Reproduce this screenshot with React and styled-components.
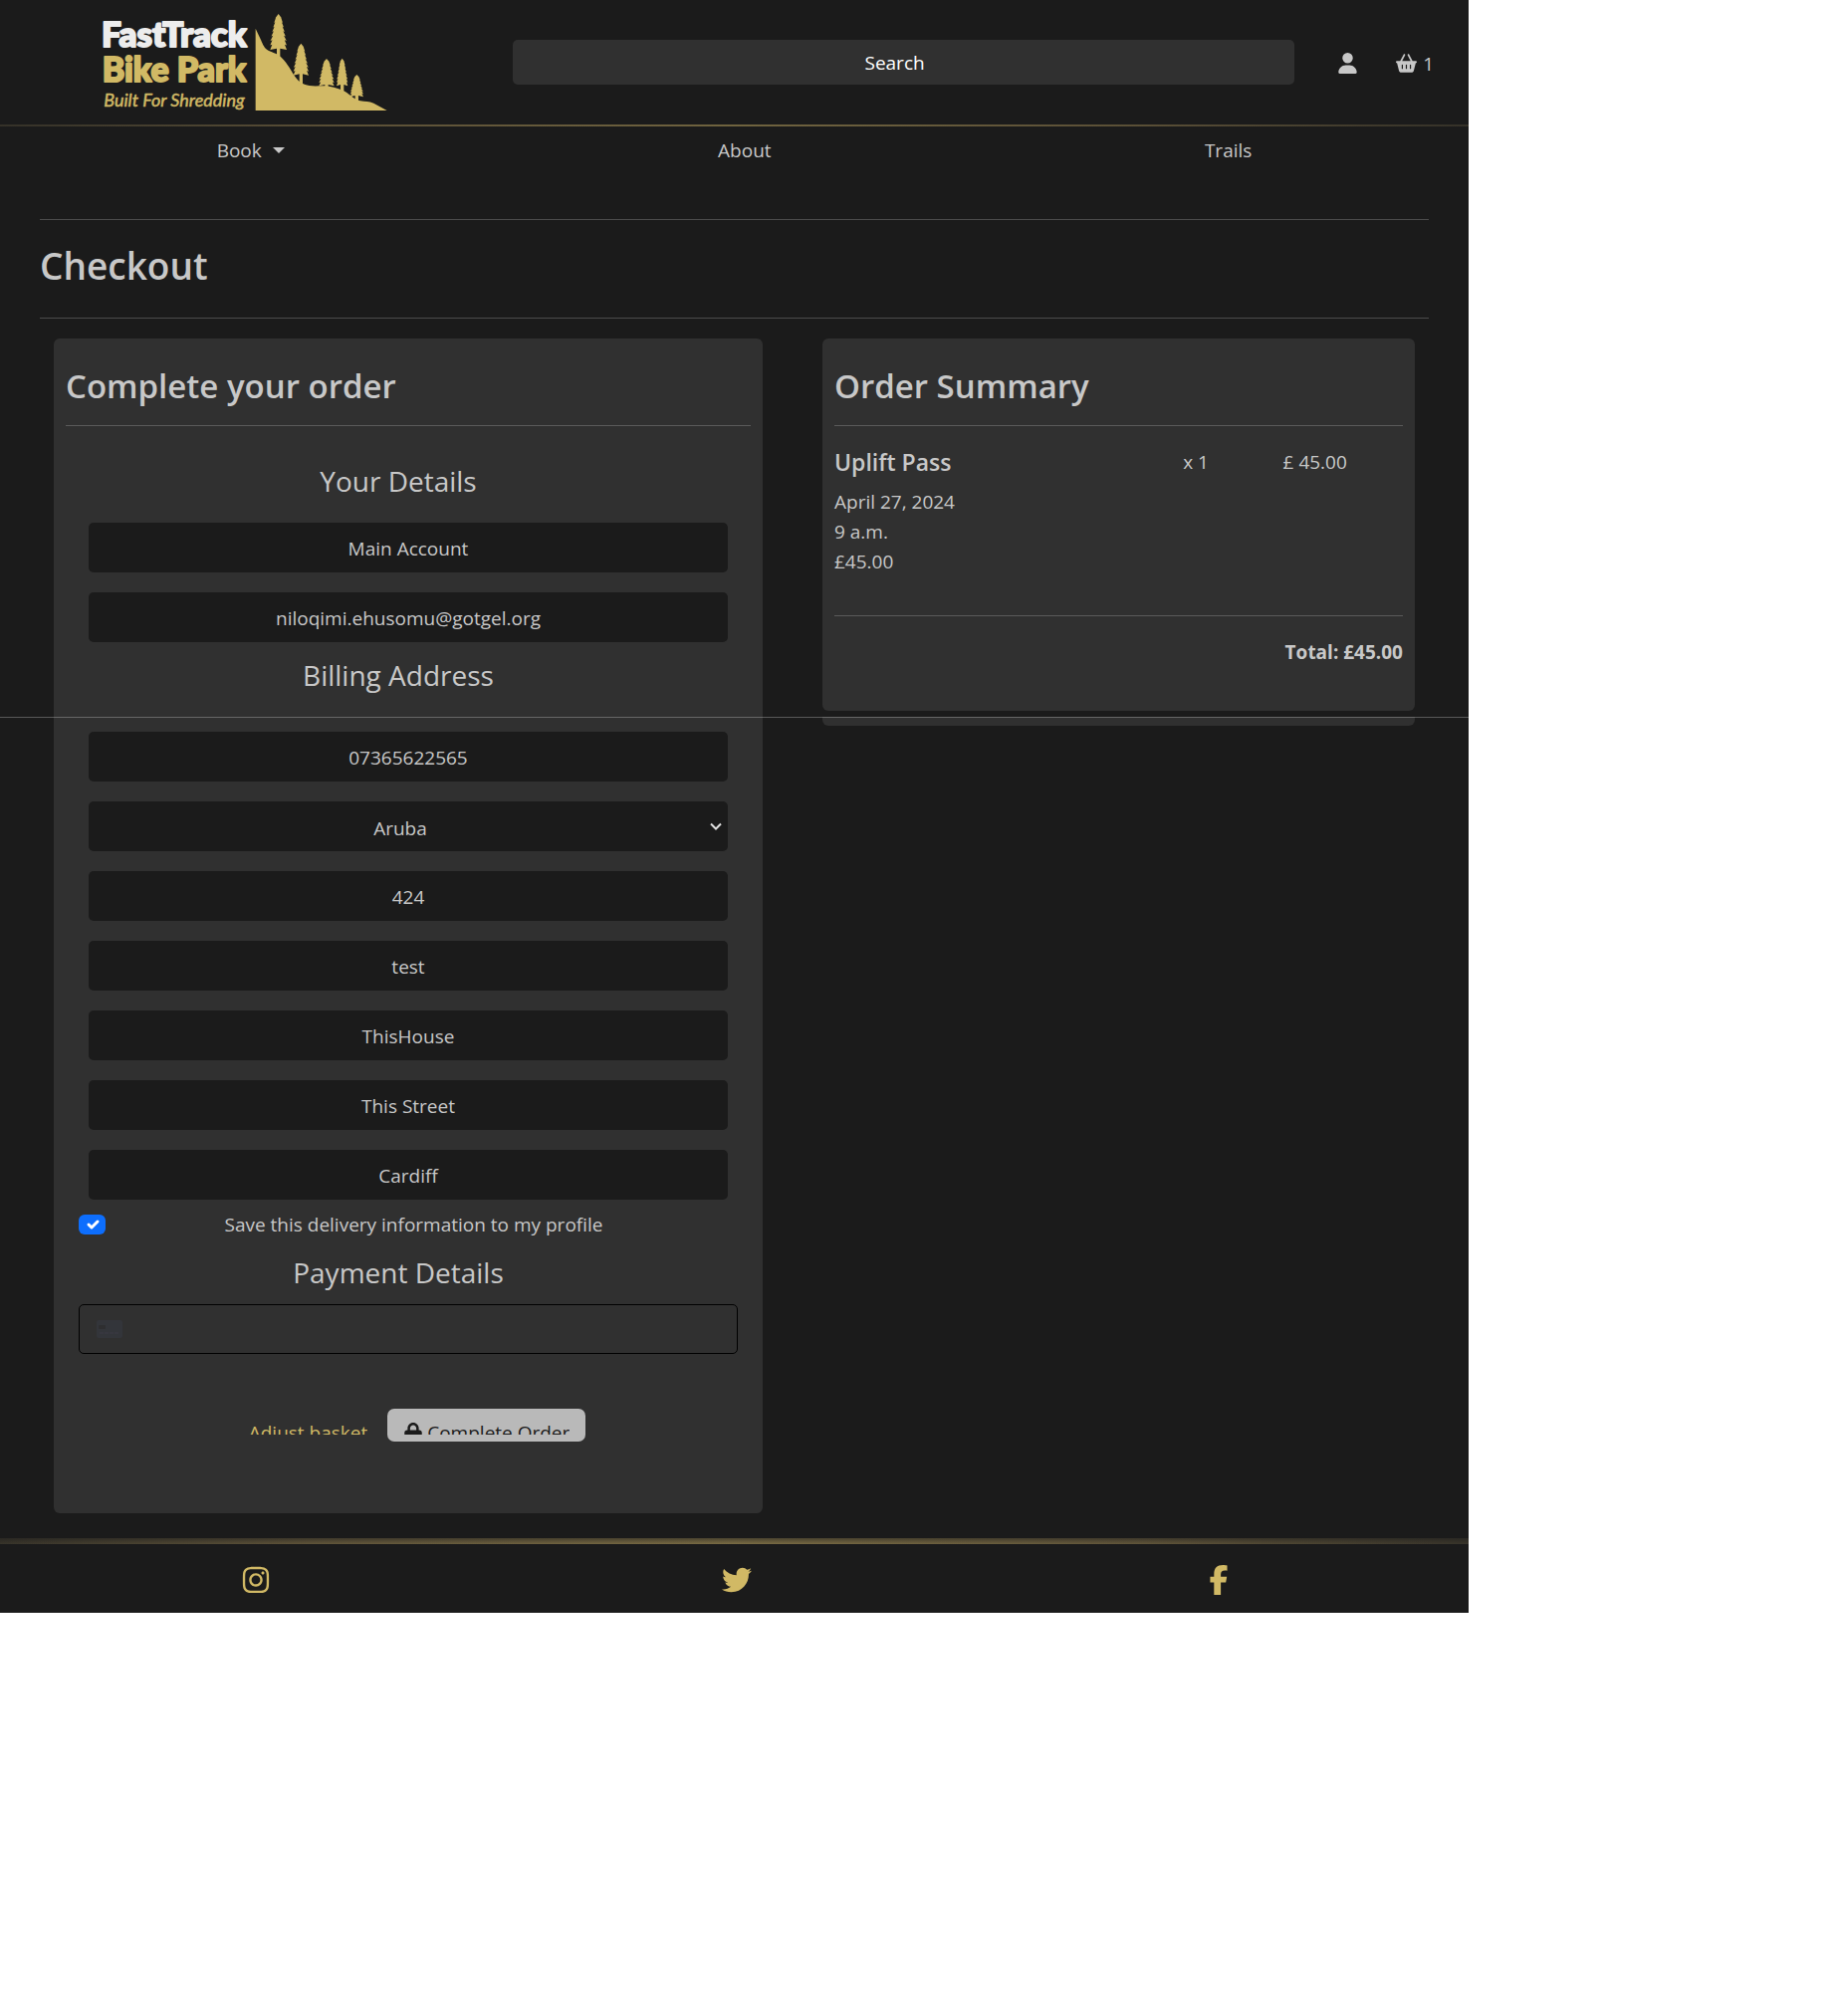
import React from "react";
import styled, { createGlobalStyle } from "styled-components";
import {
  FaUser,
  FaBasketShopping,
  FaLock,
  FaInstagram,
  FaTwitter,
  FaFacebookF,
} from "react-icons/fa6";

const c = {
  dark: "#1b1b1b",
  panel: "#303030",
  text: "#c8c8c8",
  gold: "#d1b965",
  rule: "rgba(200, 200, 200, 0.28)",
};

const GlobalStyle = createGlobalStyle`
  *, *::before, *::after { box-sizing: border-box; }
  body {
    margin: 0;
    background: #fff;
    color: ${c.text};
    font: 400 19px/30px "Open Sans", "Noto Sans", sans-serif;
  }
  h1, h2, h3, h4, p { margin: 0; }
  a { color: inherit; text-decoration: none; }
  input, select, button { font: inherit; color: inherit; }
`;

const Page = styled.div`
  position: relative;
  max-width: 1475px;
  background: ${c.dark};
`;

const Header = styled.header`
  display: flex;
  align-items: center;
  height: 125px;
  padding: 0 35px 0 100px;
`;

const LogoLink = styled.a`
  display: block;
  flex: none;
  width: 292px;
  height: 104px;
  svg { display: block; }
`;

const SearchForm = styled.form`
  flex: 1;
  display: flex;
  margin: 0 43px 0 123px;
`;

const SearchInput = styled.input`
  width: 100%;
  height: 45px;
  padding: 0 30px 0 12px;
  border: 0;
  border-radius: 5px;
  background: ${c.panel};
  text-align: center;
  &::placeholder { color: #fff; opacity: 1; }
`;

const HeaderLinks = styled.div`
  display: flex;
  gap: 38px;
  padding-top: 2px;
`;

const IconLink = styled.a`
  display: flex;
  align-items: center;
  gap: 6px;
  svg { width: auto; height: 21px; }
`;

const GoldRule = styled.div`
  height: ${(p) => (p.$thick ? 6 : 2)}px;
  background:
    linear-gradient(180deg, rgba(27, 27, 27, ${(p) => (p.$thick ? 0.5 : 0.25)}), rgba(27, 27, 27, 0)),
    linear-gradient(90deg, #38342a, #62563a 22%, #7b6d44 50%, #62563a 78%, #38342a);
`;

const Nav = styled.nav`
  display: flex;
  justify-content: space-around;
  padding: 9px 0;
`;

const NavItem = styled.a`
  display: flex;
  align-items: center;
`;

const MenuButton = styled.button`
  display: flex;
  align-items: center;
  gap: 11px;
  padding: 0;
  border: 0;
  background: none;
  &::after {
    content: "";
    border: 6px solid transparent;
    border-top-color: currentColor;
    border-bottom: 0;
  }
`;

const Main = styled.main`
  padding: 45px 40px 25px;
`;

const Rule = styled.hr`
  height: 1px;
  margin: 0;
  border: 0;
  background: ${c.rule};
`;

const PageTitle = styled.h1`
  padding: 22px 0 28px;
  font-size: 37px;
  font-weight: 600;
  line-height: 48px;
`;

const Columns = styled.div`
  display: grid;
  grid-template-columns: 712fr 595fr;
  gap: 60px;
  align-items: start;
  padding: 20px 14px 0;
`;

const Card = styled.section`
  padding: 27px 12px ${(p) => p.$bottom}px;
  border-radius: 6px;
  background: ${c.panel};
`;

const CardTitle = styled.h2`
  padding-bottom: 18px;
  font-size: 33px;
  font-weight: 600;
  line-height: 42px;
`;

const GroupTitle = styled.h3`
  padding: ${(p) => p.$top}px 20px ${(p) => p.$bottom}px 0;
  font-size: 28px;
  font-weight: 400;
  line-height: 36px;
  text-align: center;
`;

const Fields = styled.div`
  display: grid;
  gap: 20px;
  padding: 0 23px;
`;

const Field = styled.input`
  width: 100%;
  height: 50px;
  padding: 2px 15px 0;
  border: 0;
  border-radius: 5px;
  background: ${c.dark};
  text-align: center;
`;

const SelectField = styled.select`
  appearance: none;
  width: 100%;
  height: 50px;
  padding: 4px 23px 0 7px;
  border: 0;
  border-radius: 5px;
  background: ${c.dark} url("data:image/svg+xml,%3Csvg xmlns='http://www.w3.org/2000/svg' width='12' height='8'%3E%3Cpath d='M1 1.5l5 5 5-5' fill='none' stroke='%23e0e0e0' stroke-width='2'/%3E%3C/svg%3E") no-repeat right 6px center;
  text-align: center;
  text-align-last: center;
`;

const SaveRow = styled.div`
  display: flex;
  align-items: center;
  padding: 10px 13px 0;
`;

const Checkbox = styled.input`
  appearance: none;
  flex: none;
  width: 27px;
  height: 20px;
  margin: 0;
  border-radius: 6px;
  background: #444;
  &:checked {
    background: #0d6efd url("data:image/svg+xml,%3Csvg xmlns='http://www.w3.org/2000/svg' viewBox='0 0 20 20'%3E%3Cpath fill='none' stroke='%23fff' stroke-linecap='round' stroke-linejoin='round' stroke-width='3' d='m6 10 3 3 6-6'/%3E%3C/svg%3E") no-repeat center / contain;
  }
`;

const SaveLabel = styled.label`
  flex: 1;
  padding-right: 16px;
  text-align: center;
`;

const PaymentBox = styled.div`
  display: flex;
  align-items: center;
  gap: 12px;
  height: 50px;
  margin: 0 13px;
  padding: 0 17px;
  border: 1px solid #000;
  border-radius: 5px;
`;

const PaymentInput = styled.input`
  flex: 1;
  border: 0;
  outline: 0;
  background: none;
`;

const Actions = styled.div`
  display: flex;
  justify-content: center;
  gap: 20px;
  height: 33px;
  margin-top: 55px;
  padding-left: 18px;
`;

const Clipped = styled.span`
  display: flex;
  align-items: flex-start;
  gap: 4px;
  height: 17px;
  overflow: hidden;
  white-space: nowrap;
  svg { flex: none; width: auto; height: 20px; margin-top: 5px; }
`;

const AdjustLink = styled.a`
  padding-top: 9px;
  color: ${c.gold};
`;

const SubmitButton = styled.button`
  display: flex;
  align-items: flex-start;
  height: 33px;
  padding: 9px 16px 0;
  border: 0;
  border-radius: 7px;
  background: #b9b9b9;
  color: ${c.dark};
`;

const Line = styled.div`
  display: grid;
  grid-template-columns: 349fr 100fr 120fr;
  padding: 20px 0 39px;
`;

const ItemName = styled.h3`
  padding-bottom: 9px;
  font-size: 23px;
  font-weight: 600;
  line-height: 32px;
`;

const LineFigure = styled.p`
  line-height: 32px;
`;

const Total = styled.p`
  padding-top: 21px;
  font-weight: 700;
  text-align: right;
`;

const CardEdge = styled.div`
  height: 9px;
  margin-top: 6px;
  border-radius: 0 0 6px 6px;
  background: ${c.panel};
`;

const Seam = styled.div`
  position: absolute;
  top: 720px;
  left: 0;
  right: 0;
  height: 1px;
  background: rgba(200, 200, 200, 0.36);
`;

const Footer = styled.footer`
  display: flex;
  align-items: center;
  justify-content: space-around;
  height: 69px;
  padding: 2px 9px 0 15px;
  color: ${c.gold};
  svg { display: block; width: auto; height: 30px; }
`;

function treePath(cx, top, bottom, half, foot) {
  const layers = 8;
  const step = (bottom - top) / layers;
  const right = [];
  for (let i = 1; i <= layers; i += 1) {
    const spread = half * Math.min(1, 0.3 + (0.9 * i) / layers);
    const y = top + step * i;
    right.push([spread, y], [spread * 0.76, y - step * 0.15]);
  }
  right[right.length - 1] = [5, bottom - 4];
  right.push([5, foot]);
  const left = right.map(([x, y]) => [-x, y]).reverse();
  return `M${cx} ${top}` + [...right, ...left].map(([x, y]) => `L${cx + x} ${y}`).join("") + "Z";
}

const trees = [
  [89, 18, 126, 25, 152],
  [157, 107, 203, 23, 228],
  [234, 153, 235, 23, 240],
  [281, 152, 235, 17, 252],
  [325, 201, 268, 20, 282],
];

function Logo() {
  return (
    <svg width="292" height="104" viewBox="0 0 292 104" role="img" aria-label="FastTrack Bike Park">
      <g fontFamily="Lato, sans-serif" textAnchor="middle" strokeLinejoin="round">
        <text x="75" y="36" fontSize="35" fontWeight="900" fill="#ededed" stroke="#ededed" strokeWidth="2">FastTrack</text>
        <text x="75" y="71" fontSize="34" fontWeight="900" fill={c.gold} stroke={c.gold} strokeWidth="2">Bike Park</text>
        <text x="75" y="96" fontSize="18" fontWeight="400" fontStyle="italic" fill={c.gold} stroke={c.gold} strokeWidth="0.5">Built For Shredding</text>
      </g>
      <g fill={c.gold} transform="translate(150 -3) scale(0.3333)">
        <path d="M20 62L36 96C42 110 46 122 60 129C76 136 86 138 98 149C118 168 128 192 142 211C152 224 164 231 182 234C202 237 222 233 242 236C262 240 276 244 290 252C306 262 318 276 336 280C350 283 362 281 376 287L416 309H20Z" />
        {trees.map((t) => (
          <path key={t[0]} d={treePath(...t)} />
        ))}
      </g>
    </svg>
  );
}

function CardGlyph() {
  return (
    <svg width="26" height="18" viewBox="0 0 26 18" aria-hidden="true">
      <rect width="26" height="18" rx="2" fill="#33353a" />
      <rect x="2" y="5" width="7" height="4" rx="1" fill="#2e2e30" />
      <path d="M3 13h20" stroke="#37373f" strokeWidth="2" strokeDasharray="4 1" />
    </svg>
  );
}

const details = [
  ["Full name", "Main Account"],
  ["Email", "niloqimi.ehusomu@gotgel.org"],
];
const address = [
  ["Postcode", "424"],
  ["Town or city", "test"],
  ["Address line 1", "ThisHouse"],
  ["Address line 2", "This Street"],
  ["County", "Cardiff"],
];

export default function App() {
  return (
    <>
      <GlobalStyle />
      <Page>
        <Header>
          <LogoLink href="#"><Logo /></LogoLink>
          <SearchForm role="search">
            <SearchInput type="text" placeholder="Search" aria-label="Search" />
          </SearchForm>
          <HeaderLinks>
            <IconLink href="#" aria-label="Account"><FaUser /></IconLink>
            <IconLink href="#" aria-label="Basket"><FaBasketShopping />1</IconLink>
          </HeaderLinks>
        </Header>
        <GoldRule />
        <Nav>
          <MenuButton type="button">Book</MenuButton>
          <NavItem href="#">About</NavItem>
          <NavItem href="#">Trails</NavItem>
        </Nav>
        <Main>
          <Rule />
          <PageTitle>Checkout</PageTitle>
          <Rule />
          <Columns>
            <Card as="form" $bottom={72}>
              <CardTitle>Complete your order</CardTitle>
              <Rule />
              <GroupTitle $top={37} $bottom={24}>Your Details</GroupTitle>
              <Fields>
                {details.map(([label, value]) => (
                  <Field key={label} aria-label={label} defaultValue={value} />
                ))}
              </Fields>
              <GroupTitle $top={15} $bottom={39}>Billing Address</GroupTitle>
              <Fields>
                <Field type="tel" aria-label="Phone number" defaultValue="07365622565" />
                <SelectField aria-label="Country" defaultValue="AW">
                  <option value="AW">Aruba</option>
                </SelectField>
                {address.map(([label, value]) => (
                  <Field key={label} aria-label={label} defaultValue={value} />
                ))}
              </Fields>
              <SaveRow>
                <Checkbox type="checkbox" id="save-info" defaultChecked />
                <SaveLabel htmlFor="save-info">Save this delivery information to my profile</SaveLabel>
              </SaveRow>
              <GroupTitle $top={15} $bottom={14}>Payment Details</GroupTitle>
              <PaymentBox>
                <CardGlyph />
                <PaymentInput aria-label="Card number" />
              </PaymentBox>
              <Actions>
                <AdjustLink href="#"><Clipped>Adjust basket</Clipped></AdjustLink>
                <SubmitButton type="button">
                  <Clipped><FaLock />Complete Order</Clipped>
                </SubmitButton>
              </Actions>
            </Card>
            <div>
              <Card $bottom={44}>
                <CardTitle>Order Summary</CardTitle>
                <Rule />
                <Line>
                  <div>
                    <ItemName>Uplift Pass</ItemName>
                    <p>April 27, 2024</p>
                    <p>9 a.m.</p>
                    <p>£45.00</p>
                  </div>
                  <LineFigure>x 1</LineFigure>
                  <LineFigure>£ 45.00</LineFigure>
                </Line>
                <Rule />
                <Total>Total: £45.00</Total>
              </Card>
              <CardEdge />
            </div>
          </Columns>
        </Main>
        <GoldRule $thick />
        <Footer>
          <a href="#" aria-label="Instagram"><FaInstagram /></a>
          <a href="#" aria-label="Twitter"><FaTwitter /></a>
          <a href="#" aria-label="Facebook"><FaFacebookF /></a>
        </Footer>
        <Seam />
      </Page>
    </>
  );
}
